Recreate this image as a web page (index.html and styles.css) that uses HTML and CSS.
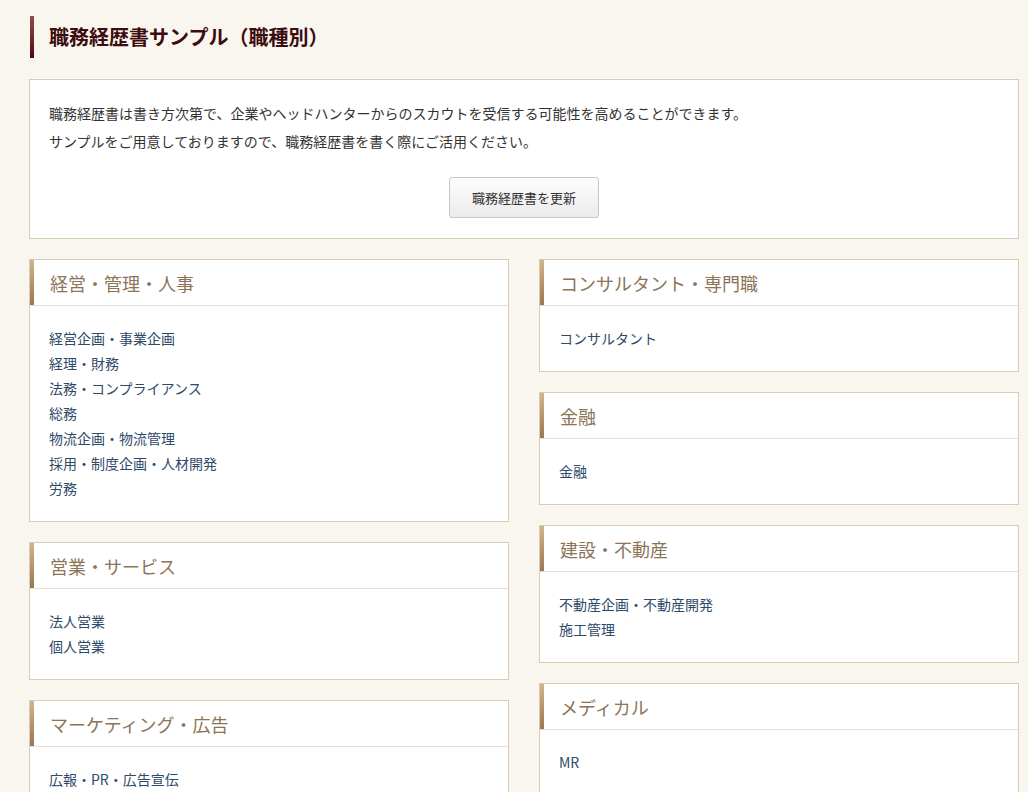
FILE: index.html
```html
<!DOCTYPE html>
<html lang="ja">
<head>
<meta charset="utf-8">
<title>職務経歴書サンプル（職種別）</title>
<link rel="stylesheet" href="styles.css">
</head>
<body>
<div class="page">
  <h1 class="page-title">職務経歴書サンプル（職種別）</h1>

  <section class="intro">
    <p>職務経歴書は書き方次第で、企業やヘッドハンターからのスカウトを受信する可能性を高めることができます。</p>
    <p>サンプルをご用意しておりますので、職務経歴書を書く際にご活用ください。</p>
    <div class="intro-action"><button class="btn" type="button">職務経歴書を更新</button></div>
  </section>

  <div class="columns">
    <div class="column">
      <section class="card">
        <h2 class="card-head">経営・管理・人事</h2>
        <ul class="card-list">
          <li><a href="#">経営企画・事業企画</a></li>
          <li><a href="#">経理・財務</a></li>
          <li><a href="#">法務・コンプライアンス</a></li>
          <li><a href="#">総務</a></li>
          <li><a href="#">物流企画・物流管理</a></li>
          <li><a href="#">採用・制度企画・人材開発</a></li>
          <li><a href="#">労務</a></li>
        </ul>
      </section>
      <section class="card">
        <h2 class="card-head">営業・サービス</h2>
        <ul class="card-list">
          <li><a href="#">法人営業</a></li>
          <li><a href="#">個人営業</a></li>
        </ul>
      </section>
      <section class="card">
        <h2 class="card-head">マーケティング・広告</h2>
        <ul class="card-list">
          <li><a href="#">広報・PR・広告宣伝</a></li>
        </ul>
      </section>
    </div>
    <div class="column">
      <section class="card">
        <h2 class="card-head">コンサルタント・専門職</h2>
        <ul class="card-list">
          <li><a href="#">コンサルタント</a></li>
        </ul>
      </section>
      <section class="card">
        <h2 class="card-head">金融</h2>
        <ul class="card-list">
          <li><a href="#">金融</a></li>
        </ul>
      </section>
      <section class="card">
        <h2 class="card-head">建設・不動産</h2>
        <ul class="card-list">
          <li><a href="#">不動産企画・不動産開発</a></li>
          <li><a href="#">施工管理</a></li>
        </ul>
      </section>
      <section class="card">
        <h2 class="card-head">メディカル</h2>
        <ul class="card-list">
          <li><a href="#">MR</a></li>
        </ul>
      </section>
    </div>
  </div>
</div>
</body>
</html>
```

FILE: styles.css
```css
* { box-sizing: border-box; }

html, body {
  margin: 0;
  padding: 0;
  background: #f9f6f0;
}

body {
  font-family: "Noto Sans CJK JP", "Noto Sans", sans-serif;
  color: #333;
  font-size: 14px;
}

.page {
  width: 990px;
  margin-left: 29px;
  padding-top: 16px;
}

.page-title {
  margin: 0 0 21px 1px;
  height: 42px;
  display: flex;
  align-items: center;
  padding-left: 19px;
  background: linear-gradient(to bottom, #9a4a4c, #4a0c10) no-repeat left top / 4px 100%;
  font-size: 20px;
  font-weight: bold;
  color: #3d0c0e;
  line-height: 1;
}

.intro {
  background: #fff;
  border: 1px solid #d8ccb6;
  padding: 19px 19px 20px;
}

.intro p {
  margin: 0;
  font-size: 14px;
  line-height: 28px;
  color: #333;
}

.intro-action {
  display: flex;
  justify-content: center;
  margin-top: 22px;
}

.btn {
  width: 150px;
  height: 41px;
  font-family: inherit;
  font-size: 13px;
  color: #333;
  background: linear-gradient(to bottom, #fdfdfd, #ebebeb);
  border: 1px solid #c8c8c8;
  border-radius: 3px;
  cursor: pointer;
}

.columns {
  display: grid;
  grid-template-columns: 480px 480px;
  column-gap: 30px;
  margin-top: 20px;
  align-items: start;
}

.column {
  display: flex;
  flex-direction: column;
  gap: 20px;
}

.card {
  background: #fff;
  border: 1px solid #d8ccb6;
}

.card-head {
  margin: 0;
  height: 46px;
  display: flex;
  align-items: center;
  padding-left: 20px;
  background: linear-gradient(to bottom, #d2b48c, #9c7650) no-repeat left top / 4px 45px;
  border-bottom: 1px solid #e6dfd3;
  font-size: 18px;
  font-weight: normal;
  color: #8c7457;
  line-height: 1;
}

.card-list {
  list-style: none;
  margin: 0;
  padding: 20px 19px 20px;
}

.card-list li {
  line-height: 25px;
  font-size: 14px;
}

.card-list a {
  color: #2e4a69;
  text-decoration: none;
}
```
